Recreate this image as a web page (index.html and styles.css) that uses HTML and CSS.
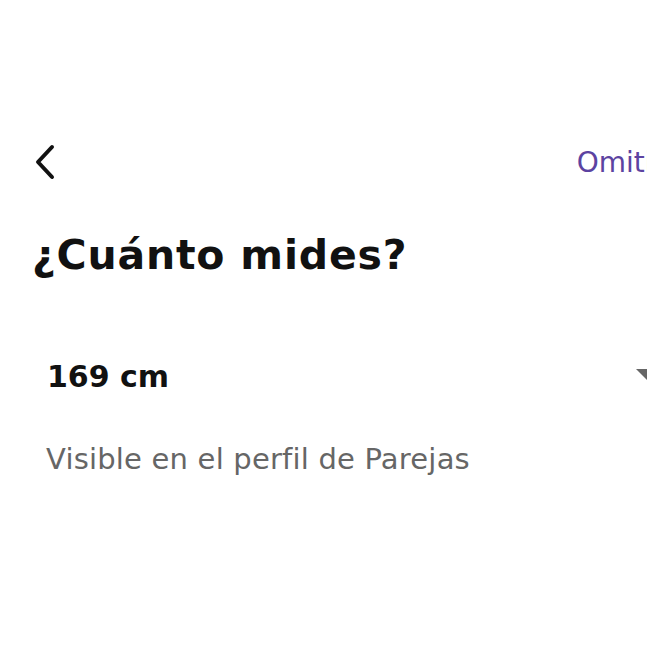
FILE: index.html
```html
<!DOCTYPE html>
<html lang="es">
<head>
    <meta charset="UTF-8" />
    <meta name="viewport" content="width=device-width, initial-scale=1.0"/>
    <title>¿Cuánto mides?</title>
    <link rel="stylesheet" href="styles.css">
</head>
<body>
    <div class="screen">
        <div class="top-bar">
            <button class="back-btn" aria-label="Atrás">
                <svg width="22" height="36" viewBox="0 0 22 36">
                    <path d="M18 3 L4 18 L18 33" fill="none" stroke="#111" stroke-width="4" stroke-linecap="round" stroke-linejoin="round"/>
                </svg>
            </button>
            <span class="skip">Omitir</span>
        </div>

        <h1>¿Cuánto mides?</h1>

        <div class="select-row">
            <span class="value">169 cm</span>
            <span class="caret"></span>
        </div>

        <p class="hint">Visible en el perfil de Parejas</p>
    </div>
</body>
</html>
```

FILE: styles.css
```css
* {
    margin: 0;
    padding: 0;
    box-sizing: border-box;
}

html, body {
    width: 647px;
    height: 647px;
    overflow: hidden;
    background: #fff;
}

body {
    font-family: 'DejaVu Sans', 'Open Sans', sans-serif;
}

.screen {
    width: 700px;
    padding: 143px 0 0 32px;
}

.top-bar {
    display: flex;
    align-items: center;
    justify-content: space-between;
    height: 38px;
    padding-right: 36px;
}

.back-btn {
    background: none;
    border: none;
    display: flex;
    padding: 0 0 0 2px;
}

.skip {
    color: #5c43a1;
    font-size: 28px;
}

h1 {
    margin-top: 50px;
    font-size: 41px;
    font-weight: 700;
    letter-spacing: 0.8px;
    color: #111;
}

.select-row {
    display: flex;
    align-items: center;
    justify-content: space-between;
    margin-top: 80px;
    padding-left: 15px;
    width: 628px;
}

.value {
    font-size: 30px;
    font-weight: 700;
    color: #111;
}

.caret {
    width: 0;
    height: 0;
    margin-top: -4px;
    border-left: 12px solid transparent;
    border-right: 12px solid transparent;
    border-top: 12px solid #666;
}

.hint {
    margin-top: 48px;
    padding-left: 14px;
    font-size: 29px;
    letter-spacing: 0.2px;
    color: #666;
}
```
